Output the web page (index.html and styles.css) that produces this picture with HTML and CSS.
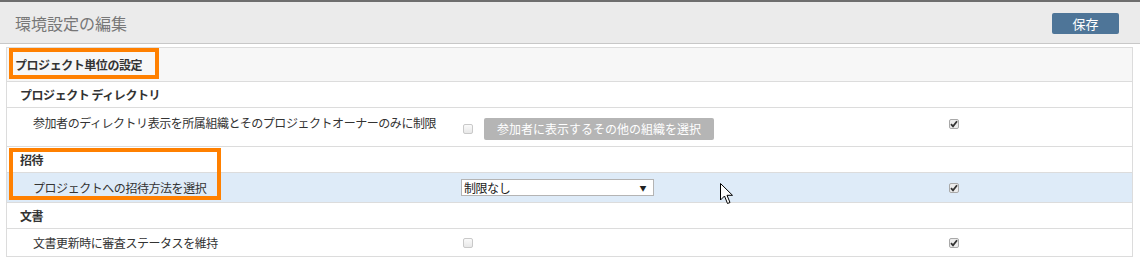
FILE: index.html
```html
<!DOCTYPE html>
<html>
<head>
    <meta charset="utf-8">
    <meta name="viewport" content="width=device-width, initial-scale=1">
    <title>環境設定の編集</title>
<link rel="stylesheet" href="styles.css">
</head>
<body>
<div class="header">
    <h1 class="title">環境設定の編集</h1>
    <button type="button" class="save">保存</button>
</div>

<div class="settings">
    <div class="row section">
        <div class="label">プロジェクト単位の設定</div>
    </div>

    <div class="row group">
        <div class="label">プロジェクト ディレクトリ</div>
    </div>
    <div class="row item top">
        <div class="label">参加者のディレクトリ表示を所属組織とそのプロジェクトオーナーのみに制限</div>
        <div class="control">
            <span class="check"></span>
            <span class="btn-off">参加者に表示するその他の組織を選択</span>
        </div>
        <div class="flag"><span class="check on"></span></div>
    </div>

    <div class="row group">
        <div class="label">招待</div>
    </div>
    <div class="row item hl">
        <div class="label">プロジェクトへの招待方法を選択</div>
        <div class="control">
            <div class="select"><span>制限なし</span><span class="arrow">&#9660;</span></div>
        </div>
        <div class="flag"><span class="check on"></span></div>
    </div>

    <div class="row group">
        <div class="label">文書</div>
    </div>
    <div class="row item last">
        <div class="label">文書更新時に審査ステータスを維持</div>
        <div class="control"><span class="check"></span></div>
        <div class="flag"><span class="check on"></span></div>
    </div>

    <!-- callouts -->
    <div class="mark mark1"></div>
    <div class="mark mark2"></div>

    <svg class="cursor" width="16" height="23" viewBox="0 0 16 23">
        <path d="M0.5 0.5 L0.5 17 L4.5 13 L7.5 20.5 L10 19.5 L7 12.3 L12.5 12.3 Z" fill="#fff" stroke="#000" stroke-width="1"/>
    </svg>
</div>
</body>
</html>
```

FILE: styles.css
```css
*
{
  margin: 0;
  padding: 0;
  box-sizing: border-box;
}

body
{
  font-family: "Noto Sans CJK JP", "Noto Sans", sans-serif;
  font-size: 12px;
  color: #333;
  background: #fff;
}

div.header
{
  display: flex;
  align-items: center;
  justify-content: space-between;
  height: 44px;
  padding: 0 21px 0 15px;
  background: #ebebeb;
  border-top: 2px solid #6e6e6e;
  border-bottom: 1px solid #c8c8c8;
}

h1.title
{
  font-size: 16px;
  font-weight: normal;
  color: #777;
}

button.save
{
  width: 67px;
  height: 21px;
  margin-top: 2px;
  border: 0;
  border-radius: 2px;
  background: #4e7598;
  color: #fff;
  font-family: inherit;
  font-size: 13px;
}

div.settings
{
  position: relative;
  width: 1127px;
  margin: 3px 0 0 6px;
  border: 1px solid #dcdcdc;
  border-bottom: 0;
}

div.row
{
  display: flex;
  align-items: center;
  border-bottom: 1px solid #dcdcdc;
}

div.row .label
{
  width: 448px;
  flex-shrink: 0;
  letter-spacing: -0.45px;
}

div.section
{
  height: 34px;
  background: #f7f7f7;
  font-weight: bold;
}

div.section .label
{
  padding-left: 8px;
}

div.group
{
  height: 26px;
  font-weight: bold;
}

div.group .label
{
  padding-left: 13px;
}

div.item .label
{
  padding-left: 26px;
}

div.item
{
  height: 30px;
}

div.item.top
{
  height: 39px;
  align-items: flex-start;
}

div.item.top .label
{
  padding-top: 6px;
}

div.item.top .control
{
  padding-top: 10px;
}

div.item.top .flag
{
  padding-top: 11px;
}

div.item.hl
{
  background: #deebf8;
}

div.item.last
{
  height: 28px;
}

div.control
{
  display: flex;
  align-items: center;
  width: 490px;
  padding-left: 8px;
  flex-shrink: 0;
}

div.flag
{
  display: flex;
  padding-left: 4px;
}

span.check
{
  display: inline-block;
  width: 10px;
  height: 10px;
  border: 1px solid #c9c9c9;
  border-radius: 2px;
  background: linear-gradient(#fafafa, #e8e8e8);
}

span.check.on
{
  border-color: #a9a9a9;
  background: #ececec url("data:image/svg+xml,%3Csvg xmlns='http://www.w3.org/2000/svg' width='8' height='8' viewBox='0 0 8 8'%3E%3Cpath d='M1 4.2 L3 6.3 L7 1.3' fill='none' stroke='%23333' stroke-width='1.8'/%3E%3C/svg%3E") center no-repeat;
}

span.btn-off
{
  display: inline-block;
  height: 22px;
  line-height: 22px;
  margin-left: 11px;
  padding: 0 13px;
  border-radius: 2px;
  background: #b5b5b5;
  color: #fff;
  font-size: 12px;
}

div.select
{
  display: flex;
  justify-content: space-between;
  align-items: center;
  width: 193px;
  height: 17px;
  margin-left: -2px;
  padding: 0 7px 0 2px;
  border: 1px solid #b4b4b4;
  background: #fff;
  color: #222;
  letter-spacing: -0.45px;
}

div.select .arrow
{
  font-size: 7px;
}

div.mark
{
  position: absolute;
  border: 4px solid #ff8000;
}

div.mark1
{
  left: 2px;
  top: 0;
  width: 150px;
  height: 31px;
}

div.mark2
{
  left: 2px;
  top: 100px;
  width: 212px;
  height: 52px;
}

svg.cursor
{
  position: absolute;
  left: 713px;
  top: 135px;
}
```
